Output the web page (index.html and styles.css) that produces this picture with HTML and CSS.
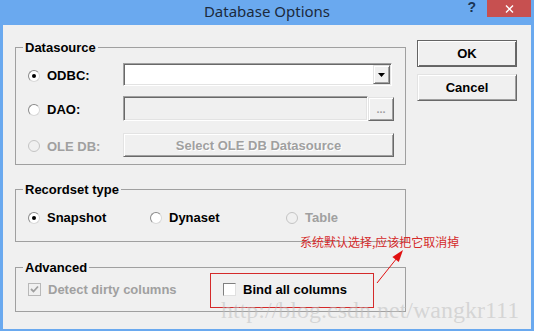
FILE: index.html
```html
<!DOCTYPE html>
<html lang="zh-CN">
<head>
    <meta charset="UTF-8">
    <title>Database Options</title>
    <link rel="stylesheet" href="styles.css">
</head>
<body>
    <div class="window">
        <div class="titlebar">
            <span class="title">Database Options</span>
            <div class="controls">
                <span class="help">?</span>
                <span class="close">
                    <svg width="9" height="8" viewBox="0 0 9 8"><path d="M1 0.5 L8 7.5 M8 0.5 L1 7.5" stroke="#fff" stroke-width="1.4"/></svg>
                </span>
            </div>
        </div>

        <div class="client">
            <div class="groups">
                <fieldset class="group group-ds">
                    <legend>Datasource</legend>
                    <div class="ds-rows">
                        <div class="ds-row">
                            <label class="opt"><span class="radio on"></span>ODBC:</label>
                            <div class="combo">
                                <span class="combo-btn">
                                    <svg width="7" height="4" viewBox="0 0 7 4"><path d="M0 0 H7 L3.5 4 Z" fill="#000"/></svg>
                                </span>
                            </div>
                        </div>
                        <div class="ds-row">
                            <label class="opt"><span class="radio"></span>DAO:</label>
                            <div class="field-wrap">
                                <div class="field"></div>
                                <button class="btn-raised dots">...</button>
                            </div>
                        </div>
                        <div class="ds-row ole">
                            <label class="opt disabled"><span class="radio off"></span>OLE DB:</label>
                            <button class="btn-raised wide disabled">Select OLE DB Datasource</button>
                        </div>
                    </div>
                </fieldset>

                <fieldset class="group group-rs">
                    <legend>Recordset type</legend>
                    <div class="rs-row">
                        <label class="opt"><span class="radio on"></span>Snapshot</label>
                        <label class="opt"><span class="radio"></span>Dynaset</label>
                        <label class="opt disabled"><span class="radio off"></span>Table</label>
                    </div>
                </fieldset>

                <fieldset class="group group-adv">
                    <legend>Advanced</legend>
                    <div class="adv-row">
                        <label class="opt disabled">
                            <span class="check off">
                                <svg width="9" height="9" viewBox="0 0 9 9"><path d="M1 4 L3.5 6.5 L8 1.5" fill="none" stroke="#a0a0a0" stroke-width="1.8"/></svg>
                            </span>Detect dirty columns
                        </label>
                        <label class="opt"><span class="check"></span>Bind all columns</label>
                    </div>
                </fieldset>
            </div>

            <div class="buttons">
                <button class="btn default">OK</button>
                <button class="btn">Cancel</button>
            </div>
        </div>

        <div class="note">系统默认选择,应该把它取消掉</div>
        <div class="mark"></div>
        <svg class="arrow" width="50" height="50" viewBox="370 244 50 50">
            <line x1="377" y1="283" x2="397" y2="258" stroke="#e01010" stroke-width="1"/>
            <polygon points="403,250 392.4,257 398.8,262" fill="#e01010"/>
        </svg>
        <div class="watermark">http://blog.csdn.net/wangkr111</div>
    </div>
</body>
</html>
```

FILE: styles.css
```css
body {
    margin: 0;
    background-color: #6aa9ef;
    font-family: 'Liberation Sans', Arial, sans-serif;
}

.window {
    position: relative;
    width: 534px;
    height: 331px;
    background-color: #6aa9ef;
    display: flex;
    flex-direction: column;
}

/* title bar */
.titlebar {
    height: 25px;
    display: grid;
    grid-template-columns: 1fr auto 1fr;
}

.title {
    grid-column: 2;
    font-family: 'Noto Sans', sans-serif;
    font-size: 15px;
    line-height: 22px;
    color: #1c2a3c;
}

.controls {
    grid-column: 3;
    justify-self: end;
    display: flex;
    align-items: flex-start;
    margin-right: 3px;
}

.help {
    font-weight: bold;
    font-size: 14px;
    line-height: 15px;
    color: #1b3654;
    margin-right: 11px;
}

.close {
    width: 44px;
    height: 17px;
    background-color: #c75050;
    display: flex;
    align-items: center;
    justify-content: center;
}

/* client area */
.client {
    flex: 1;
    margin: 0 3px 2px;
    background-color: #f0f0f0;
    display: grid;
    grid-template-columns: 391px 100px;
    column-gap: 11px;
    padding-left: 12px;
    align-items: start;
}

.groups {
    padding-top: 15px;
    display: flex;
    flex-direction: column;
}

.group {
    margin: 0;
    padding: 0 0 0 7px;
    border: 1px solid #a0a0a0;
    min-width: 0;
}

.group legend {
    padding: 0 2px;
    font-weight: bold;
    font-size: 13px;
    line-height: 15px;
    color: #000;
}

.group-rs {
    margin-top: 17px;
}

.group-adv {
    margin-top: 18px;
}

.opt {
    display: flex;
    align-items: center;
    font-weight: bold;
    font-size: 13px;
    line-height: 15px;
    color: #000;
    white-space: nowrap;
}

.opt.disabled {
    color: #a0a0a0;
}

/* radio and check */
.radio {
    width: 10px;
    height: 10px;
    border-radius: 50%;
    border: 1px solid #8a8a8a;
    border-right-color: #d8d8d8;
    border-bottom-color: #d8d8d8;
    background-color: #fff;
    margin-right: 7px;
    display: flex;
    align-items: center;
    justify-content: center;
}

.radio.on::after {
    content: '';
    width: 4px;
    height: 4px;
    border-radius: 50%;
    background-color: #000;
}

.radio.off {
    border-color: #c4c4c4;
    background-color: #f0f0f0;
}

.check {
    width: 11px;
    height: 11px;
    border: 1px solid #808080;
    border-right-color: #e0e0e0;
    border-bottom-color: #e0e0e0;
    background-color: #fff;
    margin-right: 7px;
    display: flex;
    align-items: center;
    justify-content: center;
}

.check.off {
    border-color: #b8b8b8;
    background-color: #f0f0f0;
}

/* datasource */
.ds-rows {
    display: grid;
    grid-template-rows: 23px 25px 24px;
    row-gap: 10px;
    padding: 8px 11px 9px 5px;
}

.ds-row {
    display: grid;
    grid-template-columns: 95px 1fr;
    align-items: center;
}

.ds-row .opt {
    padding-top: 2px;
}

.ds-row.ole {
    margin-top: 2px;
}

.combo {
    height: 23px;
    margin-right: 2px;
    box-sizing: border-box;
    background-color: #fff;
    border: 1px solid #a0a0a0;
    border-right-color: #fff;
    border-bottom-color: #fff;
    box-shadow: inset 1px 1px #696969, inset -1px -1px #e3e3e3;
    display: flex;
    justify-content: flex-end;
    align-items: center;
    padding-right: 1px;
}

.combo-btn {
    width: 17px;
    height: 19px;
    box-sizing: border-box;
    background-color: #f0f0f0;
    border: 1px solid #e3e3e3;
    border-right-color: #696969;
    border-bottom-color: #696969;
    box-shadow: inset 1px 1px #fff, inset -1px -1px #a0a0a0;
    display: flex;
    align-items: center;
    justify-content: center;
}

.field-wrap {
    display: flex;
    height: 25px;
}

.field {
    flex: 1;
    box-sizing: border-box;
    background-color: #f0f0f0;
    border: 1px solid #a0a0a0;
    border-right-color: #fff;
    border-bottom-color: #fff;
    box-shadow: inset 1px 1px #696969, inset -1px -1px #e3e3e3;
}

.btn-raised {
    font-family: 'Liberation Sans', Arial, sans-serif;
    font-weight: bold;
    font-size: 13px;
    box-sizing: border-box;
    background-color: #f0f0f0;
    border: 1px solid #e3e3e3;
    border-right-color: #696969;
    border-bottom-color: #696969;
    box-shadow: inset 1px 1px #fff, inset -1px -1px #a0a0a0;
    padding: 0;
    color: #000;
}

.btn-raised.disabled {
    color: #a0a0a0;
    text-shadow: 1px 1px #fff;
}

.dots {
    width: 26px;
    margin-top: 1px;
    color: #a0a0a0;
    font-size: 11px;
    line-height: 16px;
}

.wide {
    height: 24px;
}

/* recordset / advanced rows */
.rs-row {
    display: grid;
    grid-template-columns: 122px 136px auto;
    padding: 13px 0 16px 5px;
}

.adv-row {
    display: grid;
    grid-template-columns: 195px auto;
    padding: 7px 0 14px 5px;
}

/* right buttons */
.buttons {
    padding-top: 15px;
    display: flex;
    flex-direction: column;
    gap: 7px;
}

.btn {
    height: 27px;
    font-family: 'Liberation Sans', Arial, sans-serif;
    font-weight: bold;
    font-size: 13px;
    color: #000;
    background-color: #f0f0f0;
    border: 1px solid #e3e3e3;
    border-right-color: #696969;
    border-bottom-color: #696969;
    box-shadow: inset 1px 1px #fff, inset -1px -1px #a0a0a0;
    padding: 0;
}

.btn.default {
    border: 1px solid #646464;
    box-shadow: inset 1px 1px #fff, inset -1px -1px #696969;
}

/* annotations over the screenshot */
.note {
    position: absolute;
    left: 300px;
    top: 234px;
    font-family: 'Noto Sans CJK SC', sans-serif;
    font-size: 12px;
    line-height: 16px;
    color: #d42a2a;
}

.mark {
    position: absolute;
    left: 210px;
    top: 273px;
    width: 162px;
    height: 33px;
    border: 1px solid #d42a2a;
}

.arrow {
    position: absolute;
    left: 370px;
    top: 244px;
}

.watermark {
    position: absolute;
    left: 221px;
    top: 296px;
    font-family: 'Liberation Serif', serif;
    font-size: 24px;
    line-height: 28px;
    color: rgba(190, 190, 190, 0.55);
    white-space: nowrap;
}
```
